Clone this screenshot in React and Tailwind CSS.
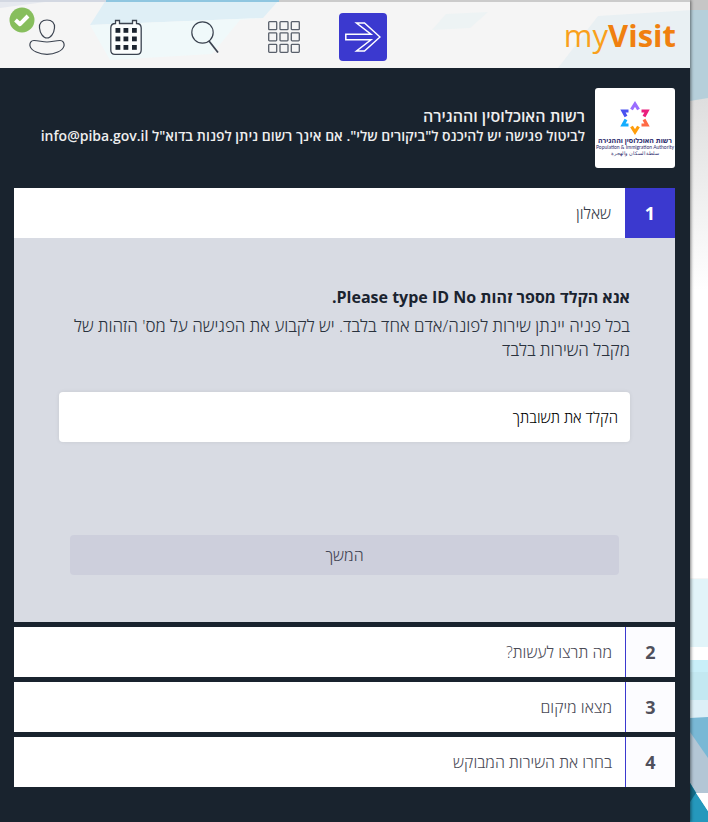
import React, { useState } from 'react';

const STEPS = [
  { id: 2, title: 'מה תרצו לעשות?' },
  { id: 3, title: 'מצאו מיקום' },
  { id: 4, title: 'בחרו את השירות המבוקש' },
];

const Backdrop = () => (
  <svg
    className="absolute inset-0 h-full w-full"
    viewBox="0 0 708 822"
    preserveAspectRatio="xMaxYMin slice"
    aria-hidden="true"
  >
    <defs>
      <linearGradient id="paper" x1="0" y1="0" x2="0" y2="1">
        <stop offset="0" stopColor="#dedede" />
        <stop offset="0.4" stopColor="#ffffff" />
      </linearGradient>
    </defs>
    <rect width="708" height="822" fill="#f5f5f5" />
    <rect x="690" y="98" width="18" height="480" fill="url(#paper)" />
    <polygon points="0,0 60,0 0,8" fill="#e6e9ef" />
    <polygon points="106,0 279,0 263,18 90,25" fill="#dfeff6" />
    <polygon points="90,25 263,18 240,20 212,54 110,60" fill="#f0f9fa" />
    <polygon points="446,14 488,12 470,28 432,30" fill="#edf3f4" />
    <polygon points="598,16 708,9 708,68 558,68" fill="#e9f0f3" />
    <rect width="106" height="2" fill="#d3d8e2" />
    <rect x="106" width="173" height="2" fill="#8fc6e0" />
    <rect x="279" width="411" height="2" fill="#cbcbcb" />
    <polygon points="690,10 708,9 708,98 690,101" fill="#b6cfda" />
    <rect x="690" width="18" height="10" fill="#c6c6c6" />
    <rect x="690" y="579" width="18" height="68" fill="#e2f4f9" />
    <rect x="690" y="647" width="18" height="13" fill="#ffffff" />
    <rect x="690" y="660" width="18" height="12" fill="#c9eff9" />
    <rect x="690" y="672" width="18" height="28" fill="#c3e8f1" />
    <rect x="690" y="700" width="18" height="18" fill="#dceff7" />
    <polygon points="690,718 708,717 708,760 690,736" fill="#79b8d5" />
    <polygon points="690,732 708,758 708,793 690,793" fill="#b3c6d5" />
    <polygon points="690,783 708,811 708,822 690,822" fill="#2598bc" />
    <polygon points="696,793 708,793 708,811" fill="#ffffff" />
    <polygon points="690,783 696,793 690,802" fill="#136a86" />
  </svg>
);

const UserIcon = () => (
  <svg width="36" height="36" viewBox="0 0 36 36" fill="none" stroke="#3b4350" strokeWidth="1.2">
    <path d="M18 1C13 1 10 4 10.500 9C11 14 14 19 18 19C22 19 25 14 25.500 9C26 4 23 1 18 1Z" />
    <path d="M5 21.500C10 21.500 13 23 18 23C23 23 26 21.500 31 21.500C34 21.500 35.500 24 35 27C34 32 25 35.400 18 35.400C11 35.400 2 32 1 27C.5 24 2 21.500 5 21.500Z" />
  </svg>
);

const CalendarIcon = () => (
  <svg width="32" height="36" viewBox="0 0 32 36" fill="none">
    <path
      d="M5.500 1.500H9.500V4.500H22.500V1.500H26.500V4.500C29.500 4.500 31.200 6 31.200 9V31C31.200 34 29.800 35.300 27 35.300H5C2.200 35.300 .8 34 .8 31V9C.8 6 2.500 4.500 5.500 4.500Z"
      fill="#fbfdfd"
      stroke="#3b4350"
      strokeWidth="1.300"
    />
    {[9, 17.500, 26].map((y) =>
      [5.500, 13.500, 22].map((x) => <rect key={`${x}-${y}`} x={x} y={y} width="4.800" height="4.800" fill="#1a232f" />)
    )}
  </svg>
);

const SearchIcon = () => (
  <svg width="28" height="32" viewBox="0 0 28 32" fill="none" stroke="#3b4350" strokeWidth="1.200">
    <circle cx="11.500" cy="11.500" r="10.700" />
    <path d="M18 20L27 31.500" strokeWidth="1.700" />
  </svg>
);

const GridIcon = () => (
  <svg width="32" height="32" viewBox="0 0 32 32" fill="none" stroke="#59606b" strokeWidth="1.300">
    {[0.7, 11.800, 23.300].map((y) =>
      [0.7, 12, 23.300].map((x) => <rect key={`${x}-${y}`} x={x} y={y} width="8" height="8" rx=".8" />)
    )}
  </svg>
);

const ArrowIcon = () => (
  <svg width="36" height="30" viewBox="0 0 36 30" fill="none" stroke="#ffffff" strokeWidth="1.500">
    <path d="M.8 12.200H26L11.500 1H19.500L35 15L19.500 29H11.500L26 17.800H.8Z" />
  </svg>
);

const NAV = [
  { label: 'האזור האישי', Icon: UserIcon },
  { label: 'הביקורים שלי', Icon: CalendarIcon },
  { label: 'חיפוש', Icon: SearchIcon },
  { label: 'כל השירותים', Icon: GridIcon },
  { label: 'כניסה', Icon: ArrowIcon, active: true },
];

const Header = () => (
  <header dir="ltr" className="flex h-[68px] items-center justify-between pt-[2px] pr-[14px] pl-[23px]">
    <nav className="flex gap-[31px] pt-1">
      {NAV.map(({ label, Icon, active }, i) => (
        <button
          key={label}
          type="button"
          aria-label={label}
          className={
            active
              ? 'flex size-12 items-center justify-center rounded bg-[#3b39cf]'
              : 'relative flex size-12 items-center justify-center'
          }
        >
          <Icon />
          {i === 0 && (
            <svg className="absolute -top-[6px] -left-[14px]" width="26" height="26" viewBox="0 0 26 26">
              <circle cx="13" cy="13" r="12.500" fill="#87be5d" />
              <path d="M6.500 13L11 17.200L19 9" fill="none" stroke="#ffffff" strokeWidth="4" strokeLinejoin="round" />
            </svg>
          )}
        </button>
      ))}
    </nav>
    <a href="#" className="font-['Open_Sans',sans-serif] text-[31px] leading-9 text-[#f9a01b]">
      my<span className="font-bold text-[#f0800f]">Visit</span>
    </a>
  </header>
);

const AuthorityLogo = () => (
  <div className="flex size-20 shrink-0 flex-col items-center justify-end rounded-[3px] bg-white pb-3 text-[#2b2a6c]">
    <svg width="30" height="34" viewBox="0 0 30 34" fill="none" strokeWidth="3.200">
      <path d="M11.500 8.500L15 3L18.500 8.500" stroke="#9b6dff" />
      <path d="M8.500 10H3L6 15.500" stroke="#4a52f0" />
      <path d="M21.500 10H27L24 15.500" stroke="#ea1f7d" />
      <path d="M6 18.500L3 24H8.500" stroke="#13adff" />
      <path d="M24 18.500L27 24H21.500" stroke="#ff6a45" />
      <path d="M11.500 25.500L15 31L18.500 25.500" stroke="#ff9d0a" />
    </svg>
    <span className="mt-[2px] text-[7px] leading-[7px] font-bold whitespace-nowrap">רשות האוכלוסין וההגירה</span>
    <span dir="ltr" className="font-['Lato',sans-serif] text-[5px] leading-[6px] whitespace-nowrap">
      Population &amp; Immigration Authority
    </span>
    <span className="text-[5px] leading-[6px] whitespace-nowrap">سلطة السكان والهجرة</span>
  </div>
);

const App = () => {
  const [answer, setAnswer] = useState('');

  return (
    <div dir="rtl" className="relative min-h-screen overflow-hidden bg-white font-['Open_Sans','Noto_Sans',sans-serif]">
      <Backdrop />
      <div className="relative mr-[18px] flex min-h-screen flex-col shadow-[1px_0_3px_rgba(0,0,0,0.5)]">
        <Header />

        <main className="grow bg-[#19232e] pt-5 pr-[15px] pb-[35px] pl-[14px]">
          <div className="flex items-center gap-[10px] text-[#eeeeee]">
            <AuthorityLogo />
            <div className="pb-1 font-semibold">
              <h1 className="text-base leading-5">רשות האוכלוסין וההגירה</h1>
              <p className="text-sm leading-5">
                לביטול פגישה יש להיכנס ל"ביקורים שלי". אם אינך רשום ניתן לפנות בדוא"ל info@piba.gov.il
              </p>
            </div>
          </div>

          <section className="mt-5">
            <div className="flex h-[50px] items-center bg-white">
              <span className="flex h-full w-[50px] items-center justify-center bg-[#3b39cf] text-lg font-bold text-white">1</span>
              <h2 className="pr-[14px] text-base font-light text-[#333a46]">שאלון</h2>
            </div>

            <form className="bg-[#d8dbe3] px-[45px] pt-[47px] pb-[47px]" onSubmit={(e) => e.preventDefault()}>
              <label htmlFor="answer" className="block text-base leading-6 font-bold text-[#1a232f]">
                אנא הקלד מספר זהות Please type ID No.
              </label>
              <p className="mt-[5px] text-[17px] leading-6 font-light text-[#2a323d]">
                בכל פניה יינתן שירות לפונה/אדם אחד בלבד. יש לקבוע את הפגישה על מס' הזהות של מקבל השירות בלבד
              </p>
              <input
                id="answer"
                type="text"
                value={answer}
                onChange={(e) => setAnswer(e.target.value)}
                placeholder="הקלד את תשובתך"
                className="mt-[30px] block h-[50px] w-full rounded bg-white px-3 text-[15px] font-light text-black shadow-[0_0_4px_rgba(0,0,0,0.08)] outline-none placeholder:text-black"
              />
              <div className="px-[11px] pt-[93px]">
                <button type="submit" className="block h-10 w-full rounded bg-[#cdcfdc] text-base font-light text-[#3e4150]">
                  המשך
                </button>
              </div>
            </form>
          </section>

          {STEPS.map((step) => (
            <section key={step.id} className="mt-[5px] flex h-[50px] items-center bg-white">
              <span className="flex h-full w-[50px] items-center justify-center border-l border-[#3b39cf] bg-[#fcfcff] text-lg font-bold text-[#50505c]">
                {step.id}
              </span>
              <h2 className="pr-[13px] text-base font-light text-[#4a4a56]">{step.title}</h2>
            </section>
          ))}
        </main>
      </div>
    </div>
  );
};

export default App;
